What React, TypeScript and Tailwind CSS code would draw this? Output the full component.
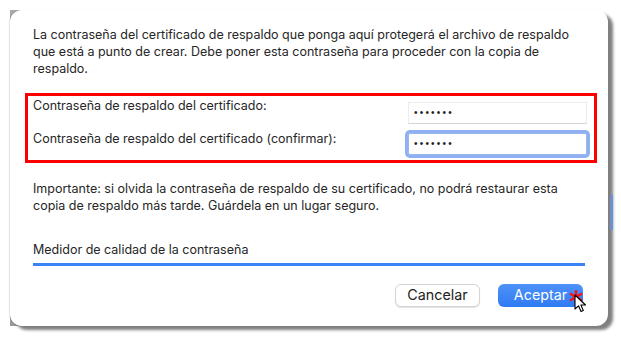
import React from "react";

function Dots() {
  return (
    <span className="text-[10px] leading-none tracking-[2.2px] text-[#222]" style={{ fontFamily: '"Liberation Sans", Arial, sans-serif' }}>•••••••</span>
  );
}

export default function App() {
  return (
    <div
      className="w-[621px] h-[340px] bg-white overflow-hidden"
      style={{ fontFamily: 'Inter, "Liberation Sans", Arial, sans-serif' }}
    >
      <div className="relative ml-[10px] mt-[10px] w-[598px] h-[316px]">
        {/* corner backdrops */}
        <div className="absolute left-0 top-0 w-[10px] h-[10px] bg-[#a9a9a9]" />
        <div className="absolute left-0 bottom-0 w-[10px] h-[10px] bg-[#9a9a9a]" />
        <div className="absolute right-[-5px] top-[185px] w-[3px] h-[35px] bg-[#6f8fd0] z-20" />
        <div className="relative z-10 w-full h-full rounded-[12px] bg-white shadow-[5px_4px_3px_rgba(0,0,0,0.5),-1px_0_1px_rgba(0,0,0,0.12)] flex flex-col pl-[23px] pr-[23px] pt-[16px] text-[12.5px] leading-[17px] text-[#262626]">
          <p>
            La contraseña del certificado de respaldo que ponga aquí protegerá el archivo de respaldo que está a punto de crear. Debe poner esta contraseña para proceder con la copia de respaldo.
          </p>

          <div className="mt-[16px] -ml-[8px] -mr-[12px] border-[3px] border-[#ff0000] pl-[5px] pr-[7px] pt-[1px] pb-[5px] flex flex-col gap-[6px]">
            <div className="flex items-start justify-between">
              <span>Contraseña de respaldo del certificado:</span>
              <div className="mt-[5px] w-[179px] h-[22px] bg-white border border-[#ececec] border-b-[#d6d6d6] flex items-center pl-[5px]">
                <Dots />
              </div>
            </div>
            <div className="flex items-start justify-between">
              <span>Contraseña de respaldo del certificado (confirmar):</span>
              <div className="mt-[3px] w-[179px] h-[22px] bg-white border border-[#9cb8ea] rounded-[2px] ring-[3px] ring-[#8fb1f3] flex items-center pl-[5px]">
                <Dots />
              </div>
            </div>
          </div>

          <p className="mt-[17px]">
            Importante: si olvida la contraseña de respaldo de su certificado, no podrá restaurar esta copia de respaldo más tarde. Guárdela en un lugar seguro.
          </p>

          <p className="mt-[27px]">Medidor de calidad de la contraseña</p>
          <div className="mt-[5px] h-[3px] bg-[#3b82f6]" />

          <div className="mt-[18px] flex justify-end gap-[18px] pr-[2px]">
            <button className="w-[85px] h-[23px] rounded-[6px] bg-white border border-[#d4d4d4] shadow-[0_1px_1px_rgba(0,0,0,0.12)] text-[14.3px] text-[#222] leading-none">
              Cancelar
            </button>
            <div className="relative">
              <button className="w-[85px] h-[23px] rounded-[6px] bg-gradient-to-b from-[#4e92f8] to-[#2f7af5] text-[14.3px] text-white leading-none">
                Aceptar
              </button>
              <svg className="absolute left-[71px] top-[6px]" width="14" height="14" viewBox="0 0 14 14">
                <g stroke="#ff1010" strokeWidth="2.4" strokeLinecap="round">
                  <line x1="7" y1="1" x2="7" y2="13" />
                  <line x1="1.8" y1="4" x2="12.2" y2="10" />
                  <line x1="1.8" y1="10" x2="12.2" y2="4" />
                </g>
              </svg>
              <svg className="absolute left-[76px] top-[10px]" width="14" height="20" viewBox="0 0 14 20">
                <path
                  d="M1 1 L1 15 L4.5 11.8 L7 17.5 L9.3 16.5 L6.9 11 L11.5 11 Z"
                  fill="white"
                  stroke="black"
                  strokeWidth="1.1"
                  strokeLinejoin="round"
                />
              </svg>
            </div>
          </div>
        </div>
      </div>
    </div>
  );
}
